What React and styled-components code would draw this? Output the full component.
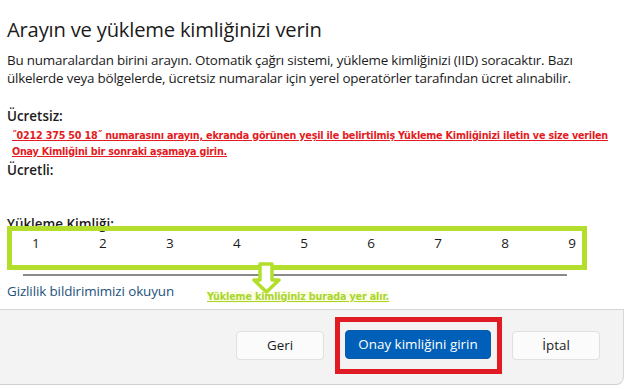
import React from 'react'
import styled, { createGlobalStyle } from 'styled-components'

const GlobalStyle = createGlobalStyle`
  html, body {
    margin: 0;
    padding: 0;
    background: #ffffff;
    font-family: "Open Sans", "Noto Sans", sans-serif;
    color: #1b1b1b;
  }
`

const Dialog = styled.div`
  width: 624px;
  height: 389px;
  display: flex;
  flex-direction: column;
  overflow: hidden;
`

const Content = styled.div`
  position: relative;
  flex: 1;
  min-height: 0;
  padding: 15px 0 0 7px;
`

const Title = styled.h1`
  margin: 0;
  font-size: 20.2px;
  font-weight: 400;
  line-height: 28px;
  letter-spacing: -0.2px;
`

const Intro = styled.p`
  margin: 8px 0 0;
  font-size: 13.4px;
  line-height: 18px;
  letter-spacing: -0.2px;
`

const Label = styled.div`
  margin-top: ${p => p.$top || 0}px;
  font-size: 13.4px;
  font-weight: 600;
  line-height: 18px;
`

const RedNote = styled.p`
  margin: 3px 0 0 5px;
  font-family: "DejaVu Sans Condensed", "DejaVu Sans", sans-serif;
  font-stretch: condensed;
  font-weight: 700;
  font-size: 10.7px;
  line-height: 16px;
  color: #e31b23;
  text-decoration: underline;
  letter-spacing: -0.2px;
`

const IdBox = styled.div`
  position: relative;
  margin: -7px 0 0 0;
  width: 580px;
  height: 44px;
  box-sizing: border-box;
  border: 5px solid #b3df2c;
  display: flex;
  justify-content: space-between;
  align-items: flex-start;
  padding: 3px 6px 0 20px;
  font-size: 13.5px;
  line-height: 18px;
`

const Digit = styled.span`
  display: inline-block;
`

const Underline = styled.div`
  margin: 4px 0 0 16px;
  width: 544px;
  height: 2px;
  background: #8a8a8a;
`

const LinkRow = styled.div`
  display: flex;
  align-items: flex-start;
  gap: 33px;
  margin-top: 6px;
`

const Link = styled.span`
  font-size: 13.4px;
  line-height: 18px;
  color: #23527c;
  letter-spacing: -0.1px;
`

const GreenNote = styled.span`
  margin-top: 9px;
  font-family: "DejaVu Sans Condensed", "DejaVu Sans", sans-serif;
  font-stretch: condensed;
  font-weight: 700;
  font-size: 10.7px;
  line-height: 12px;
  color: #a9d52a;
  background: #fbfde8;
  text-decoration: underline;
  letter-spacing: -0.15px;
`

const Arrow = styled.svg`
  position: absolute;
  left: 251px;
  top: 262px;
`

const Footer = styled.div`
  flex-shrink: 0;
  height: 70px;
  background: #f3f3f3;
  border-top: 1px solid #d4d4d4;
  border-bottom: 1px solid #cfcfcf;
  border-right: 1px solid #d8d8d8;
  border-bottom-right-radius: 8px;
  display: flex;
  align-items: center;
  justify-content: flex-end;
  padding: 0 23px 4px 0;
  margin-bottom: 4px;
`

const Button = styled.button`
  width: ${p => p.$w}px;
  height: 29px;
  border-radius: 4px;
  font-family: inherit;
  font-size: 13.4px;
  border: 1px solid ${p => (p.$primary ? '#0a5aa8' : '#e0e0e0')};
  background: ${p => (p.$primary ? '#005fb8' : '#fbfbfb')};
  color: ${p => (p.$primary ? '#ffffff' : '#1b1b1b')};
  padding: 0;
`

const RedFrame = styled.div`
  border: 5px solid #e01b24;
  padding: 8px 6px 10px 5px;
  margin: 0 10px 0 11px;
  display: flex;
`

const digits = [1, 2, 3, 4, 5, 6, 7, 8, 9]

function App() {
  return (
    <Dialog>
      <GlobalStyle />
      <Content>
        <Title>Arayın ve yükleme kimliğinizi verin</Title>
        <Intro>
          Bu numaralardan birini arayın. Otomatik çağrı sistemi, yükleme kimliğinizi (IID) soracaktır. Bazı
          <br />
          ülkelerde veya bölgelerde, ücretsiz numaralar için yerel operatörler tarafından ücret alınabilir.
        </Intro>
        <Label $top={20}>Ücretsiz:</Label>
        <RedNote>
          ˝0212 375 50 18˝ numarasını arayın, ekranda görünen yeşil ile belirtilmiş Yükleme Kimliğinizi iletin ve size verilen
          <br />
          Onay Kimliğini bir sonraki aşamaya girin.
        </RedNote>
        <Label $top={1}>Ücretli:</Label>
        <Label $top={36}>Yükleme Kimliği:</Label>
        <IdBox>
          {digits.map(d => (
            <Digit key={d}>{d}</Digit>
          ))}
        </IdBox>
        <Underline />
        <LinkRow>
          <Link>Gizlilik bildirimimizi okuyun</Link>
          <GreenNote>Yükleme kimliğiniz burada yer alır.</GreenNote>
        </LinkRow>
        <Arrow width="31" height="33" viewBox="0 0 31 33">
          <path
            d="M9 2 H21 V18 H28 L15.5 30 L3 18 H9 Z"
            fill="#ffffff"
            stroke="#b3df2c"
            strokeWidth="3.5"
            strokeLinejoin="round"
          />
        </Arrow>
      </Content>
      <Footer>
        <Button $w={88}>Geri</Button>
        <RedFrame>
          <Button $primary $w={146}>Onay kimliğini girin</Button>
        </RedFrame>
        <Button $w={88}>İptal</Button>
      </Footer>
    </Dialog>
  )
}

export default App
